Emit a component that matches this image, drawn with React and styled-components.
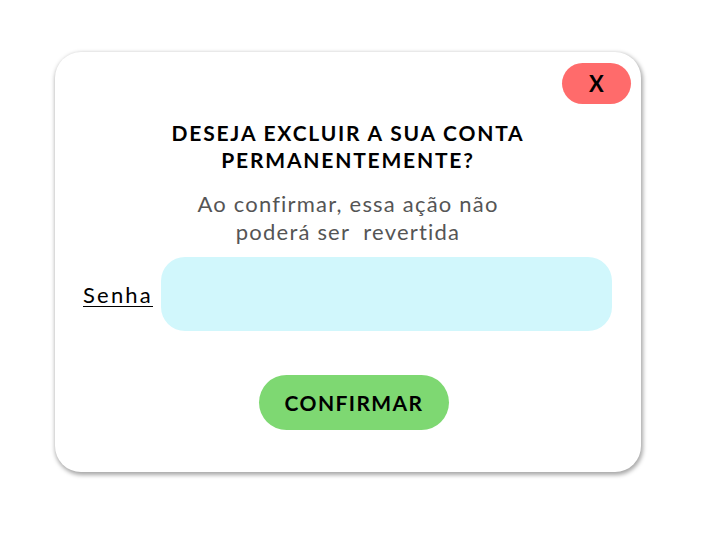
import React from "react";
import styled, { createGlobalStyle } from "styled-components";

const GlobalStyle = createGlobalStyle`
  body {
    margin: 0;
    background: #ffffff;
    font-family: "Lato", "Open Sans", sans-serif;
  }
`;

const Page = styled.div`
  width: 707px;
  height: 551px;
  padding: 52px 0 0 55px;
  box-sizing: border-box;
`;

const Modal = styled.div`
  width: 586px;
  height: 420px;
  box-sizing: border-box;
  background: #ffffff;
  border-radius: 26px;
  box-shadow: 1px 2px 4px 1px rgba(0, 0, 0, 0.35);
  padding: 11px 10px 0 28px;
  display: flex;
  flex-direction: column;
`;

const TopBar = styled.div`
  display: flex;
  justify-content: flex-end;
`;

const CloseButton = styled.button`
  width: 69px;
  height: 41px;
  border: none;
  border-radius: 21px;
  background: #ff6b6b;
  color: #000;
  font-family: inherit;
  font-weight: 700;
  font-size: 22px;
  cursor: pointer;
`;

const Title = styled.h1`
  margin: 15px 0 0 0;
  padding-right: 18px;
  text-align: center;
  font-size: 21px;
  line-height: 27px;
  font-weight: 700;
  letter-spacing: 1.8px;
  color: #000;
`;

const Subtitle = styled.p`
  margin: 17px 0 0 0;
  padding-right: 18px;
  text-align: center;
  font-size: 22px;
  line-height: 28px;
  font-weight: 400;
  letter-spacing: 1.2px;
  color: #555;
  white-space: pre-wrap;
`;

const FieldRow = styled.div`
  margin-top: 11px;
  display: flex;
  align-items: center;
  gap: 8px;
`;

const Label = styled.label`
  font-size: 22px;
  letter-spacing: 2.2px;
  color: #000;
  text-decoration: underline;
  text-underline-offset: 3px;
  text-decoration-thickness: 1px;
`;

const Input = styled.input`
  width: 451px;
  height: 74px;
  box-sizing: border-box;
  border: none;
  border-radius: 24px;
  background: #d1f7fc;
  outline: none;
  padding: 0 20px;
  font-family: inherit;
  font-size: 20px;
`;

const Footer = styled.div`
  margin-top: 44px;
  display: flex;
  justify-content: center;
  padding-right: 6px;
`;

const ConfirmButton = styled.button`
  width: 190px;
  height: 55px;
  border: none;
  border-radius: 28px;
  background: #7ed872;
  color: #000;
  font-family: inherit;
  font-weight: 700;
  font-size: 21px;
  letter-spacing: 1.4px;
  cursor: pointer;
`;

const App = () => {
  return (
    <>
      <GlobalStyle />
      <Page>
        <Modal>
          <TopBar>
            <CloseButton>X</CloseButton>
          </TopBar>
          <Title>
            DESEJA EXCLUIR A SUA CONTA
            <br />
            PERMANENTEMENTE?
          </Title>
          <Subtitle>{"Ao confirmar, essa ação não\npoderá ser  revertida"}</Subtitle>
          <FieldRow>
            <Label htmlFor="senha">Senha</Label>
            <Input id="senha" type="password" />
          </FieldRow>
          <Footer>
            <ConfirmButton>CONFIRMAR</ConfirmButton>
          </Footer>
        </Modal>
      </Page>
    </>
  );
};

export default App;
